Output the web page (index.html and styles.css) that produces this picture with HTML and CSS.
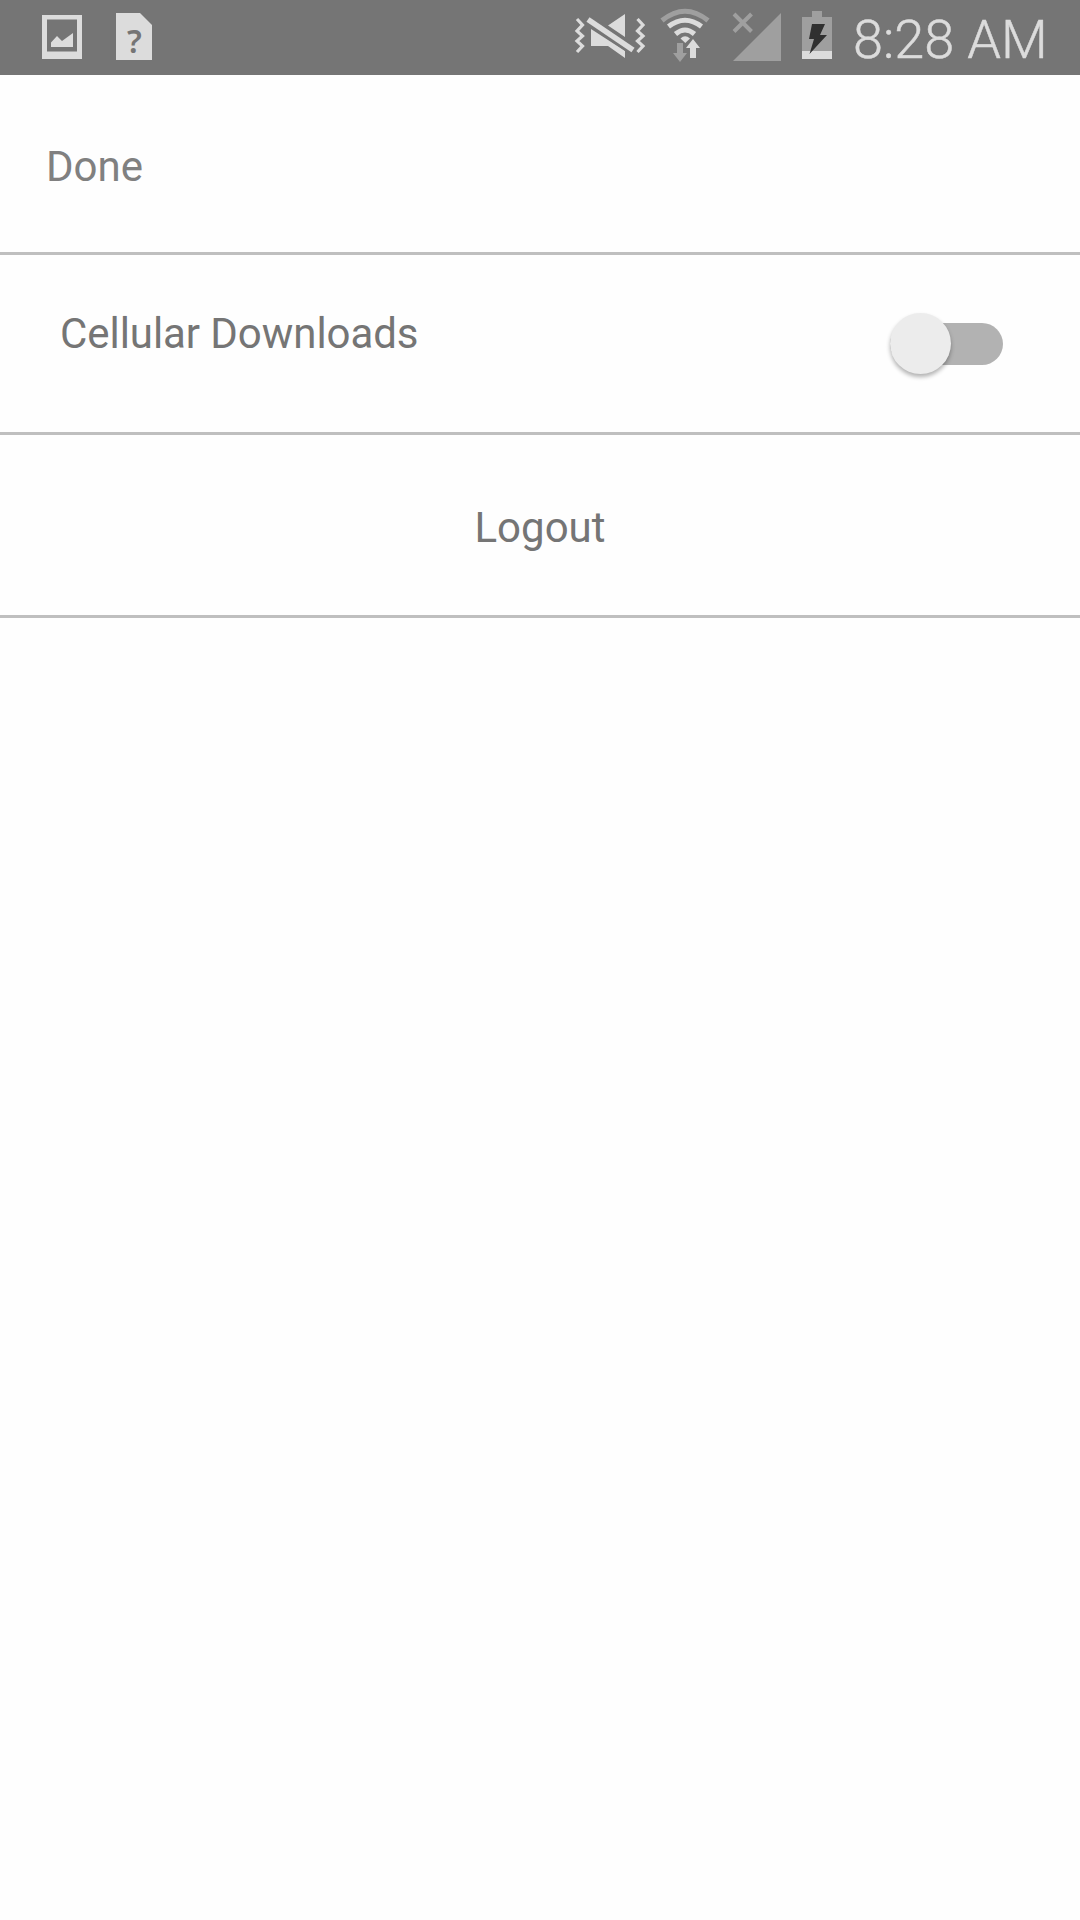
FILE: index.html
```html
<!DOCTYPE html>
<html lang="en">

<head>
    <meta charset="UTF-8" />
    <meta name="viewport" content="width=device-width, initial-scale=1.0" />
    <title>Settings</title>
    <link rel="stylesheet" href="styles.css">
</head>

<body>

    <header class="status-bar">
        <svg class="icon-image" width="40" height="44" viewBox="0 0 40 44">
            <path class="solid" fill-rule="evenodd" d="M0 0H40V44H0ZM5 4.5V36.5H35V4.5Z" />
            <path class="solid" d="M9 32V27.500L15 21L20 26L31 18V32Z" />
        </svg>
        <svg class="icon-sim" width="36" height="54" viewBox="0 0 36 54">
            <path class="solid" d="M0 0H24L36 12V47H0Z" />
            <text class="sim-mark" x="18.500" y="40" text-anchor="middle">?</text>
        </svg>

        <div class="status-right">
            <svg class="icon-mute" width="70" height="44" viewBox="575 15 70 44">
                <path class="zigzag" d="M577 19L582.500 25L577 31L582.500 36L577 41L582.500 46L577 52" />
                <path class="zigzag" d="M637.500 19L643 25L637.500 31L643 36L637.500 41L643 46L637.500 52" />
                <path class="solid" d="M625 14V37L608 25.500ZM591 29L625 51V58L608 46H591Z" />
                <path class="slash-gap" d="M588 19.500L633 50" />
                <path class="slash" d="M588 19.500L633 50" />
            </svg>
            <svg class="icon-wifi" width="50" height="56" viewBox="660 8 50 56">
                <path class="arc arc-dim" d="M662 20.500Q685 2 708 20.500" />
                <path class="arc" d="M668.500 26.500Q685 14 701.500 26.500" />
                <path class="arc" d="M675.500 34Q685 26 694.500 34" />
                <path class="solid" d="M680.500 38.500Q685 34 690 38.500L685.300 43Z" />
                <path class="dim" d="M677 43H683V53H687L680 62L673 53H677Z" />
                <path class="solid" d="M690 58V48H686L693 39L700 48H696V58Z" />
            </svg>
            <svg class="icon-signal" width="49" height="49" viewBox="732 12 49 49">
                <path class="dim" d="M781 13V61H733Z" />
                <path class="cross" d="M734 14L751.500 31.500M751.500 14L734 31.500" />
            </svg>
            <svg class="icon-battery" width="30" height="48" viewBox="802 11 30 48">
                <path class="dim" d="M812 11H822V17H832V51H802V17H812Z" />
                <path class="solid" d="M802 51H832V59H802Z" />
                <path class="bolt" d="M812 24H825L820 35H827L809.500 54L814 39H809Z" />
            </svg>
            <span class="clock">8:28 AM</span>
        </div>
    </header>

    <main class="settings">
        <div class="row row-done">
            <a class="done">Done</a>
        </div>
        <div class="row row-cellular">
            <span class="label">Cellular Downloads</span>
            <div class="switch">
                <div class="thumb"></div>
            </div>
        </div>
        <div class="row row-logout">
            <a class="label">Logout</a>
        </div>
    </main>

</body>

</html>
```
FILE: styles.css
```css
* {
    box-sizing: border-box;
}

body {
    margin: 0;
    min-height: 100vh;
    background: #fefefe;
    color: #757575;
    font-family: Roboto, sans-serif;
    font-size: 42px;
    line-height: 50px;
}

svg {
    display: block;
    flex: none;
    overflow: visible;
}

.status-bar {
    display: flex;
    align-items: flex-start;
    height: 75px;
    padding: 0 33px 0 42px;
    background: #757575;
}

.icon-image {
    margin-top: 15px;
}

.icon-sim {
    margin: 13px 0 0 34px;
}

.sim-mark {
    fill: #757575;
    font-family: "Noto Sans", sans-serif;
    font-size: 32px;
    font-weight: 600;
}

.status-right {
    display: flex;
    align-items: flex-start;
    margin-left: auto;
}

.icon-mute {
    margin-top: 15px;
}

.icon-wifi {
    margin: 8px 0 0 15px;
}

.icon-signal {
    margin: 12px 0 0 22px;
}

.icon-battery {
    margin: 11px 0 0 21px;
}

.clock {
    width: 194px;
    margin: 8px 0 0 21px;
    color: #dcdcdc;
    font-size: 54px;
    font-weight: 300;
    line-height: 64px;
    white-space: nowrap;
    -webkit-text-stroke: 0.5px #dcdcdc;
}

.solid {
    fill: #dcdcdc;
}

.dim {
    fill: #9f9f9f;
}

.bolt {
    fill: #303030;
}

.zigzag,
.slash,
.slash-gap,
.arc,
.cross {
    fill: none;
    stroke: #dcdcdc;
}

.zigzag {
    stroke-width: 3.2;
}

.slash {
    stroke-width: 5.5;
}

.slash-gap {
    stroke: #757575;
    stroke-width: 10;
}

.arc {
    stroke-width: 5;
}

.arc-dim,
.cross {
    stroke: #9f9f9f;
}

.cross {
    stroke-width: 4;
}

.row {
    display: flex;
    align-items: flex-start;
    border-bottom: 3px solid #bfbfbf;
}

.row-done {
    height: 180px;
    padding: 67px 46px 0;
}

.done {
    color: #808080;
}

.row-cellular {
    height: 180px;
    justify-content: space-between;
    padding: 54px 77px 0 60px;
    letter-spacing: -0.06px;
}

.row-logout {
    height: 183px;
    justify-content: center;
    padding-top: 68px;
}

.switch {
    display: flex;
    align-items: center;
    width: 113px;
    height: 42px;
    margin-top: 14px;
    border-radius: 21px;
    background: #b2b2b2;
}

.thumb {
    flex: none;
    width: 61px;
    height: 61px;
    margin-top: -2px;
    border-radius: 50%;
    background: #ececec;
    box-shadow: 0 3px 4px rgba(0, 0, 0, 0.3);
}
```
